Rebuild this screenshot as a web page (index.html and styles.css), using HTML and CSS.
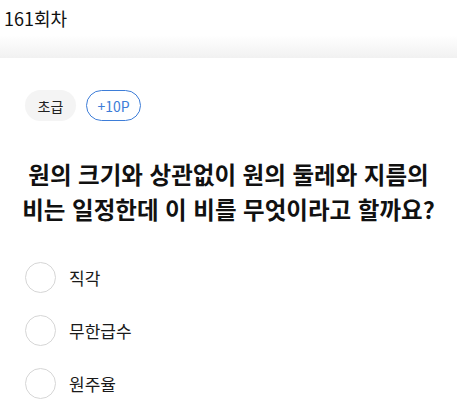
FILE: index.html
```html
<!DOCTYPE html>
<html lang="ko">
<head>
  <meta charset="UTF-8">
  <meta name="viewport" content="width=device-width, initial-scale=1.0">
  <title>퀴즈</title>
  <link rel="stylesheet" href="styles.css">
</head>
<body>
  <div class="header">
    <h1 class="round">161회차</h1>
  </div>
  <div class="shade"></div>

  <div class="card">
    <div class="tags">
      <span class="tag level">초급</span>
      <span class="tag point">+10P</span>
    </div>

    <h2 class="question">원의 크기와 상관없이 원의 둘레와 지름의<br>비는 일정한데 이 비를 무엇이라고 할까요?</h2>

    <ul class="options">
      <li class="option"><span class="radio"></span><span class="label">직각</span></li>
      <li class="option"><span class="radio"></span><span class="label">무한급수</span></li>
      <li class="option"><span class="radio"></span><span class="label">원주율</span></li>
    </ul>
  </div>
</body>
</html>
```

FILE: styles.css
```css
body {
  margin: 0;
  padding: 0;
  background: #fff;
  font-family: 'Noto Sans CJK KR', 'Noto Sans', sans-serif;
  color: #111;
  overflow: hidden;
}

.header {
  height: 35px;
  padding: 0 4px;
}

.round {
  margin: 0;
  font-size: 18px;
  font-weight: 400;
  line-height: 36px;
  color: #111;
}

.shade {
  height: 23px;
  background: linear-gradient(180deg, #ffffff, #f1f1f1);
}

.card {
  background: #fff;
  padding: 32px 25px 0;
}

.tags {
  display: flex;
  gap: 10px;
}

.tag {
  display: inline-flex;
  align-items: center;
  justify-content: center;
  height: 31px;
  box-sizing: border-box;
  border-radius: 16px;
  font-size: 14px;
}

.level {
  width: 51px;
  background: #f4f4f4;
  color: #222;
}

.point {
  width: 55px;
  border: 1px solid #3d7dd8;
  color: #3d7dd8;
}

.question {
  margin: 36px -25px 0;
  text-align: center;
  white-space: nowrap;
  font-size: 23.5px;
  font-weight: 700;
  line-height: 35px;
  color: #111;
}

.options {
  list-style: none;
  margin: 35px 0 0;
  padding: 0;
  display: flex;
  flex-direction: column;
  gap: 22px;
}

.option {
  display: flex;
  align-items: center;
  gap: 13px;
  height: 31px;
}

.radio {
  width: 31px;
  height: 31px;
  box-sizing: border-box;
  border: 1.5px solid #d6d6d6;
  border-radius: 50%;
}

.label {
  font-size: 17px;
  color: #1a1a1a;
}
```
